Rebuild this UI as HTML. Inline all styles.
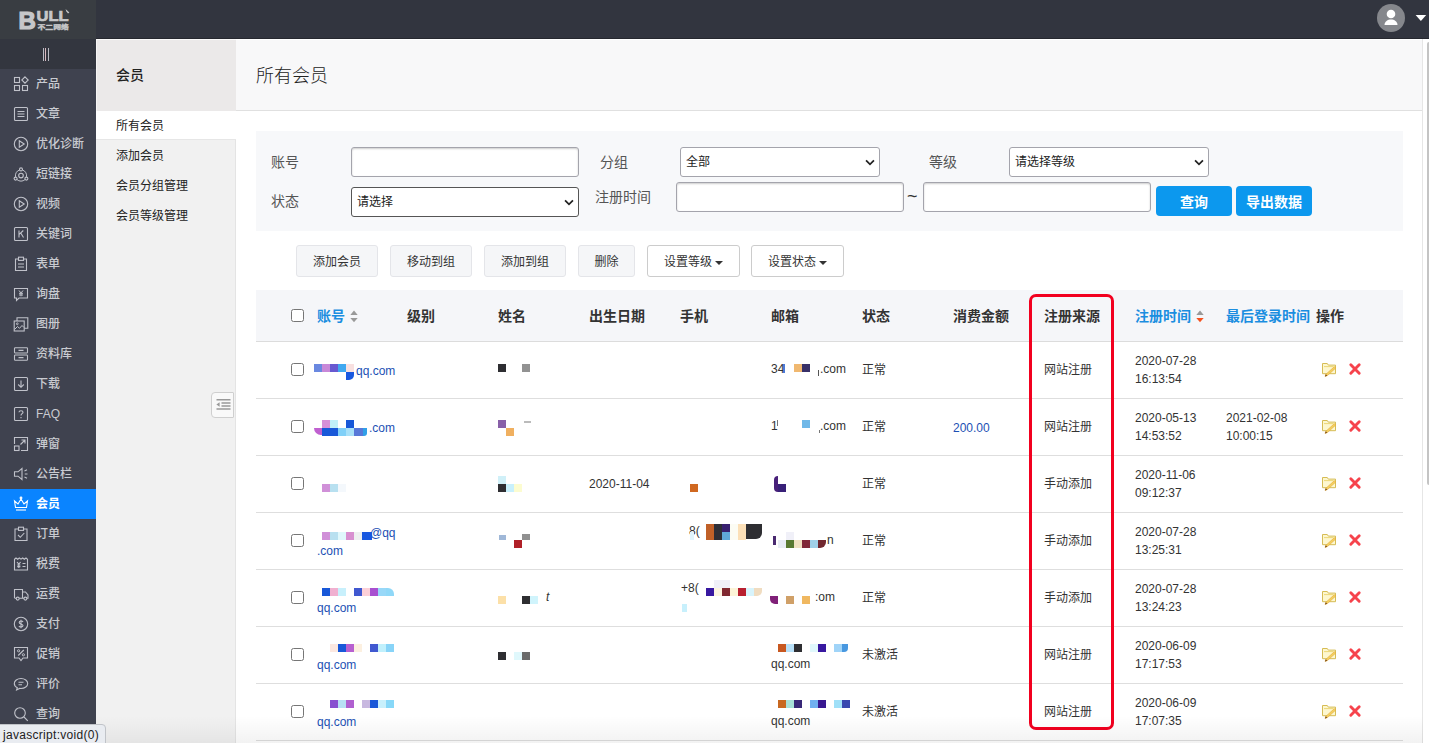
<!DOCTYPE html>
<html lang="zh-CN">
<head>
<meta charset="utf-8">
<title>所有会员</title>
<style>
*{box-sizing:border-box;margin:0;padding:0}
html,body{width:1429px;height:743px;overflow:hidden;background:#fff}
body{font-family:"Liberation Sans","Noto Sans CJK SC",sans-serif;font-size:12px;color:#333;position:relative}
a{text-decoration:none;color:inherit}
i{font-style:normal}
/* top bar */
#top{position:absolute;left:0;top:0;width:1429px;height:39px;background:#32353f;border-bottom:1px solid #26282f}
#logo{position:absolute;left:0;top:0;width:96px;height:39px;background:#393d42}
#side{position:absolute;left:0;top:39px;width:96px;height:704px;background:#3f424f}
#fold{position:absolute;left:0;top:0;width:96px;height:30px;background:#33363f}
#fold i{position:absolute;top:9px;width:1px;height:13px;background:#b9bbc4}
.mi{position:absolute;left:0;width:96px;height:30px;color:#c9cbd1;font-size:12px;font-weight:500;line-height:30px;padding-left:36px;white-space:nowrap}
.mi svg{position:absolute;left:13px;top:7px;width:16px;height:16px;fill:none;stroke:#c0c2ca;stroke-width:1.1}
.mi.on{background:#0a84ff;color:#fff;font-weight:bold}
.mi.on svg{stroke:#fff}
/* second side */
#sub{position:absolute;left:96px;top:39px;width:140px;height:704px;background:#f1f1f1;border-right:1px solid #e4e4e4}
#subh{position:absolute;left:0;top:0;width:140px;height:72px;background:#ebe9e9;border-top:1px solid #fafafa;border-left:1px solid #f6f5f5;font-size:14px;font-weight:500;color:#222;line-height:70px;padding-left:19px}
.si{position:absolute;left:0;width:139px;height:30px;line-height:30px;padding-left:20px;font-size:12px;color:#222}
.si.on{background:#fff;width:140px;height:29px;border-bottom:1px solid #e6e6e6}
#tog{position:absolute;left:115px;top:353px;width:23px;height:26px;background:#f9f9f9;border:1px solid #cfcfcf;border-radius:4px 1px 1px 4px}
/* main */
#main{position:absolute;left:236px;top:39px;width:1187px;height:704px;background:#fff;border-right:1px solid #e6e6e6}
#mh{position:absolute;left:0;top:0;width:1186px;height:72px;background:#f8f8f9;border-top:1px solid #fff;border-bottom:1px solid #e0e0e0;font-size:18px;font-weight:300;line-height:72px;padding-left:20px;color:#222}
/* filter (page coords; children of body) */
#flt{position:absolute;left:256px;top:131px;width:1147px;height:100px;background:#f7f8fa}
.lb{position:absolute;font-size:14px;color:#555;line-height:20px;white-space:nowrap}
.inp{position:absolute;height:30px;background:#fff;border:1px solid #a4a4ac;border-radius:3px;box-shadow:inset 0 1px 2px rgba(0,0,0,.2);font-size:12px;line-height:28px;padding-left:5px;color:#222}
.sel{box-shadow:none}
.sel svg{position:absolute;right:4px;top:11px;width:10px;height:7px}
.bb{position:absolute;top:186px;width:76px;height:30px;background:#0c98ee;border-radius:4px;color:#fff;font-size:14px;font-weight:bold;text-align:center;line-height:32px}
.btn{position:absolute;top:245px;height:32px;border:1px solid #e4e5e9;background:#f5f6f8;border-radius:3px;font-size:12px;color:#333;text-align:center;line-height:30px;padding-top:1px;white-space:nowrap}
.btn.w{background:#fff;border-color:#ccc}
.car{display:inline-block;width:0;height:0;border-left:4px solid transparent;border-right:4px solid transparent;border-top:4px solid #333;vertical-align:middle;margin-left:3px}
/* table */
#th{position:absolute;left:256px;top:290px;width:1147px;height:52px;background:#f5f6f9;border-bottom:1px solid #dcdcdc}
.h{position:absolute;top:306px;font-size:14px;font-weight:bold;color:#333;line-height:20px;white-space:nowrap}
.h.b{color:#1b8ee0}
.row{position:absolute;left:256px;width:1147px;height:57px;border-bottom:1px solid #dedede}
.cb{position:absolute;width:13px;height:13px;border:1px solid #767676;border-radius:2.5px;background:#fff}
.t{position:absolute;font-size:12px;line-height:18px;color:#333;white-space:nowrap}
.t.lk{color:#1c50b4}
.ic{position:absolute;width:17px;height:16px}
.m{position:absolute;display:block}
#red{position:absolute;left:1029px;top:294px;width:85px;height:436px;border:3px solid #f2001f;border-radius:7px}
#tip{position:absolute;left:-1px;top:724px;width:107px;height:20px;background:#e9ecf1;border:1px solid #c0c3c8;border-radius:0 4px 0 0;font-size:12px;letter-spacing:.3px;line-height:20px;padding-left:3px;color:#222}
#sb{position:absolute;left:1427px;top:42px;width:4px;height:443px;background:#c4c4c4;border-radius:4px}
#shade{position:absolute;left:0;top:716px;width:1423px;height:27px;background:linear-gradient(rgba(0,0,0,0),rgba(0,0,0,.05))}
</style>
</head>
<body>
<div id="top"><div id="logo">
<svg width="96" height="39" viewBox="0 0 96 39" style="position:absolute;left:0;top:0">
<text x="18.5" y="28.6" font-family="Liberation Sans,sans-serif" font-weight="bold" font-size="24" fill="#c6c7c9" stroke="#c6c7c9" stroke-width="1.2">B</text>
<text x="36.5" y="21" font-family="Liberation Sans,sans-serif" font-weight="bold" font-size="14.5" fill="#c6c7c9" stroke="#c6c7c9" stroke-width=".7" textLength="32" lengthAdjust="spacingAndGlyphs">ULL</text>
<path d="M65.5 9L69.4 12.4L68 13.6L66.3 11.2Z" fill="#c6c7c9"/>
<g transform="translate(37.5,29.3) scale(1,0.7)"><text x="0" y="0" font-family="Noto Sans CJK SC,sans-serif" font-weight="900" font-size="8.4" fill="#c6c7c9" stroke="#c6c7c9" stroke-width=".4" textLength="31.5" lengthAdjust="spacingAndGlyphs">不二网络</text></g>
</svg>
</div>
<svg width="60" height="39" viewBox="0 0 60 39" style="position:absolute;left:1369px;top:0">
<circle cx="22" cy="18" r="14" fill="#85878c"/>
<circle cx="22" cy="14" r="4.3" fill="#fff"/>
<path d="M15.5 25C15.5 17.5 28.5 17.5 28.5 25Z" fill="#fff"/>
<path d="M46.6 15h10.6l-5.3 6z" fill="#fff"/>
</svg>
</div>
<div id="side"><div id="fold"><i style="left:43px"></i><i style="left:45px;background:#d8b8c0"></i><i style="left:48px"></i></div>
<a class="mi" style="top:30px"><svg viewBox="0 0 16 16"><rect x="1.5" y="1.5" width="5" height="5"/><rect x="1.5" y="9.5" width="5" height="5"/><rect x="9.5" y="9.5" width="5" height="5"/><path d="M12 0.8 L15.2 4 L12 7.2 L8.8 4 Z"/></svg>产品</a>
<a class="mi" style="top:60px"><svg viewBox="0 0 16 16"><rect x="1.5" y="1.5" width="13" height="13" rx="1"/><path d="M4.5 5.5h7M4.5 8h7M4.5 10.5h7"/></svg>文章</a>
<a class="mi" style="top:90px"><svg viewBox="0 0 16 16"><circle cx="8" cy="8" r="6.7"/><path d="M6.3 4.8 L11.2 8 L6.3 11.2 Z"/></svg>优化诊断</a>
<a class="mi" style="top:120px"><svg viewBox="0 0 16 16"><circle cx="8" cy="9.6" r="2.3"/><circle cx="8" cy="3.4" r="1.5"/><circle cx="2.6" cy="12.6" r="1.5"/><circle cx="13.4" cy="12.6" r="1.5"/><path d="M2.6 11 A5.8 5.8 0 0 1 6.5 4 M9.5 4 A5.8 5.8 0 0 1 13.4 11 M4 13.6 A6 6 0 0 0 12 13.6" stroke-width="1"/></svg>短链接</a>
<a class="mi" style="top:150px"><svg viewBox="0 0 16 16"><circle cx="8" cy="8" r="6.7"/><path d="M6.3 4.8 L11.2 8 L6.3 11.2 Z"/></svg>视频</a>
<a class="mi" style="top:180px"><svg viewBox="0 0 16 16"><rect x="1.5" y="1.5" width="13" height="13" rx="1"/><path d="M6 4.5v7M10.3 4.5L6.2 8.3M7.8 7L10.5 11.5"/></svg>关键词</a>
<a class="mi" style="top:210px"><svg viewBox="0 0 16 16"><path d="M5.5 3H2.5v11.5h11V3h-3"/><rect x="5.5" y="1.2" width="5" height="3.2"/><path d="M5 8h6M5 11h6"/></svg>表单</a>
<a class="mi" style="top:240px"><svg viewBox="0 0 16 16"><path d="M1.5 2.5h13v9.5H6L3.5 14.5V12H1.5Z"/><path d="M6 4.5L8 7L10 4.5M8 7V10.3M6 7.3h4M6 9h4" stroke-width="1"/></svg>询盘</a>
<a class="mi" style="top:270px"><svg viewBox="0 0 16 16"><rect x="1.2" y="5" width="10" height="10"/><path d="M4 5V1.8h10.8v10.5H11.2"/><path d="M1.5 13.5L4.5 10.5L6.5 12.3L9 9.5L11 11.5" stroke-width="1"/><circle cx="4.3" cy="7.8" r="0.9" stroke-width="0.9"/></svg>图册</a>
<a class="mi" style="top:300px"><svg viewBox="0 0 16 16"><rect x="1.5" y="1.8" width="13" height="5.2" rx="0.8"/><rect x="1.5" y="9" width="13" height="5.2" rx="0.8"/><path d="M5.5 4.4h5M5.5 11.6h5"/></svg>资料库</a>
<a class="mi" style="top:330px"><svg viewBox="0 0 16 16"><rect x="1.5" y="1.5" width="13" height="13" rx="1"/><path d="M8 4.5v6.5M5.2 8.5L8 11.3L10.8 8.5"/></svg>下载</a>
<a class="mi" style="top:360px"><svg viewBox="0 0 16 16"><rect x="1.5" y="1.5" width="13" height="13" rx="1"/><path d="M6 6.2C6 4.2 10 4.2 10 6.2C10 7.8 8 7.6 8 9.5M8 11v1.2" stroke-width="1.1"/></svg>FAQ</a>
<a class="mi" style="top:390px"><svg viewBox="0 0 16 16"><path d="M8 14.5h6.5v-13h-13V8"/><rect x="1.5" y="10" width="4.5" height="4.5"/><path d="M7.5 8.5L12 4M8.5 4H12V7.5"/></svg>弹窗</a>
<a class="mi" style="top:420px"><svg viewBox="0 0 16 16"><path d="M1.5 5.8H5L9 2.5V13.5L5 10.2H1.5Z"/><path d="M11.5 5L14 3.8M11.8 8H14.5M11.5 11L14 12.2"/></svg>公告栏</a>
<a class="mi on" style="top:450px"><svg viewBox="0 0 16 16"><path d="M2.5 11.5L1.5 5L5 8L8 3L11 8L14.5 5L13.5 11.5Z"/><path d="M3 14h10"/><circle cx="8" cy="2" r="0.9"/></svg>会员</a>
<a class="mi" style="top:480px"><svg viewBox="0 0 16 16"><path d="M5.5 3H2v11.5h12V3h-3.5"/><rect x="5.5" y="1.2" width="5" height="3.2"/><path d="M5 9L7.3 11.3L11.3 7"/></svg>订单</a>
<a class="mi" style="top:510px"><svg viewBox="0 0 16 16"><path d="M1.5 3.2 L3 2 L4.7 3.2 L6.3 2 L8 3.2 L9.7 2 L11.3 3.2 L13 2 L14.5 3.2 V14 H1.5Z"/><path d="M4 6L5.8 8.2L7.6 6M5.8 8.2V12M4.2 9h3.2M4.2 10.6h3.2M9.5 7.5h3M9.5 10.5h3" stroke-width="1.1"/></svg>税费</a>
<a class="mi" style="top:540px"><svg viewBox="0 0 16 16"><path d="M1.5 12V3.5H9.5V12M9.5 6H12.5L15 9V12.2H13.8M11 12.2H6.2M3.2 12.2H1.5"/><circle cx="4.7" cy="12.6" r="1.5"/><circle cx="12.4" cy="12.6" r="1.5"/></svg>运费</a>
<a class="mi" style="top:570px"><svg viewBox="0 0 16 16"><circle cx="8" cy="8" r="6.7"/><path d="M10 6C9.6 4.6 6.2 4.6 6.2 6.4C6.2 8.2 10 7.6 10 9.6C10 11.4 6.4 11.4 6 10M8 3.8V12.2" stroke-width="1.1"/></svg>支付</a>
<a class="mi" style="top:600px"><svg viewBox="0 0 16 16"><path d="M1.5 1.5h13v10.5H10L8 14.5L6 12H1.5Z"/><path d="M5.2 9.5L10.8 4" stroke-width="1.1"/><circle cx="5.6" cy="4.8" r="1.1" stroke-width="1"/><circle cx="10.4" cy="8.8" r="1.1" stroke-width="1"/></svg>促销</a>
<a class="mi" style="top:630px"><svg viewBox="0 0 16 16"><path d="M8 2.5C4.2 2.5 1.3 4.8 1.3 7.5C1.3 9.3 2.5 10.8 4.3 11.7L3.6 14L6.6 12.4C7 12.5 7.5 12.5 8 12.5C11.8 12.5 14.7 10.2 14.7 7.5C14.7 4.8 11.8 2.5 8 2.5Z"/><path d="M5.5 6.3h5M5.5 8.7h3.5"/></svg>评价</a>
<a class="mi" style="top:660px"><svg viewBox="0 0 16 16"><circle cx="7" cy="7" r="5.3"/><path d="M11 11L14.8 14.8"/></svg>查询</a>
</div>
<div id="sub"><div id="subh">会员</div>
<div class="si on" style="top:72px">所有会员</div>
<div class="si" style="top:102px">添加会员</div>
<div class="si" style="top:132px">会员分组管理</div>
<div class="si" style="top:162px">会员等级管理</div>
<div id="tog"><svg width="15" height="11" viewBox="0 0 15 11" style="position:absolute;left:3.5px;top:6px"><path d="M0.5 0.8h14M5.5 3.9h9M5.5 7h9M0.5 10.1h14" stroke="#999" stroke-width="1.5" fill="none"/><path d="M3.6 3.2v4.6L0.4 5.5z" fill="#999"/></svg></div>
</div>
<div id="main"><div id="mh">所有会员</div></div>

<div id="flt"></div>
<span class="lb" style="left:271px;top:152px">账号</span>
<span class="lb" style="left:271px;top:191px">状态</span>
<span class="lb" style="left:600px;top:152px">分组</span>
<span class="lb" style="left:595px;top:187px">注册时间</span>
<span class="lb" style="left:929px;top:152px">等级</span>
<span class="lb" style="left:907px;top:186px;color:#333;font-size:18px">~</span>
<div class="inp" style="left:351px;top:147px;width:228px"></div>
<div class="inp sel" style="left:351px;top:187px;width:228px;border-color:#555">请选择<svg viewBox="0 0 11 8"><path d="M1 1.5L5.5 6L10 1.5" stroke="#222" stroke-width="2" fill="none"/></svg></div>
<div class="inp sel" style="left:680px;top:147px;width:200px">全部<svg viewBox="0 0 11 8"><path d="M1 1.5L5.5 6L10 1.5" stroke="#222" stroke-width="2" fill="none"/></svg></div>
<div class="inp sel" style="left:1009px;top:147px;width:200px">请选择等级<svg viewBox="0 0 11 8"><path d="M1 1.5L5.5 6L10 1.5" stroke="#222" stroke-width="2" fill="none"/></svg></div>
<div class="inp" style="left:676px;top:182px;width:228px"></div>
<div class="inp" style="left:923px;top:182px;width:228px"></div>
<a class="bb" style="left:1156px">查询</a>
<a class="bb" style="left:1236px">导出数据</a>

<a class="btn" style="left:296px;width:82px">添加会员</a>
<a class="btn" style="left:390px;width:82px">移动到组</a>
<a class="btn" style="left:484px;width:82px">添加到组</a>
<a class="btn" style="left:578px;width:57px">删除</a>
<a class="btn w" style="left:647px;width:93px">设置等级<i class="car"></i></a>
<a class="btn w" style="left:751px;width:93px">设置状态<i class="car"></i></a>

<div id="th"></div>
<span class="cb" style="left:291px;top:309px"></span>
<span class="h b" style="left:317px">账号</span>
<svg style="position:absolute;left:349.5px;top:309.5px" width="8" height="13" viewBox="0 0 8 13"><path d="M4 0.6L7.7 4.9H0.3Z" fill="#999"/><path d="M4 12.2L7.7 7.9H0.3Z" fill="#999"/></svg>
<span class="h" style="left:407px">级别</span>
<span class="h" style="left:498px">姓名</span>
<span class="h" style="left:589px">出生日期</span>
<span class="h" style="left:680px">手机</span>
<span class="h" style="left:771px">邮箱</span>
<span class="h" style="left:862px">状态</span>
<span class="h" style="left:953px">消费金额</span>
<span class="h" style="left:1044px">注册来源</span>
<span class="h b" style="left:1135px">注册时间</span>
<svg style="position:absolute;left:1195.5px;top:309.5px" width="8" height="13" viewBox="0 0 8 13"><path d="M4 0.6L7.7 4.9H0.3Z" fill="#999"/><path d="M4 12.2L7.7 7.9H0.3Z" fill="#f4511e"/></svg>
<span class="h b" style="left:1226px">最后登录时间</span>
<span class="h" style="left:1316px">操作</span>
<div class="row" style="top:342px"></div><span class="cb" style="left:291px;top:363px"></span><span class="t" style="left:862px;top:361px">正常</span><span class="t" style="left:1044px;top:361px">网站注册</span><span class="t d" style="left:1135px;top:352px">2020-07-28<br>16:13:54</span><svg class="ic" style="left:1322px;top:363px;width:16px;height:14px" viewBox="0 0 16 14"><path d="M0.5 0.5h4.8l1 1.6h7.2v8.6h-13z" fill="#fdf7cf" stroke="#d6bc55"/><path d="M2 3.6h9.5" stroke="#ecd777"/><path d="M4 11.2L12.4 3.6L13.8 5L5.4 12.6L3 13.4Z" fill="#f5d060" stroke="#dfa838" stroke-width=".6"/><path d="M3 13.4L3.7 11.3L5.3 12.8Z" fill="#7a4a18"/></svg><svg class="ic" style="left:1348px;top:362px;width:14px;height:14px" viewBox="0 0 14 14"><path d="M2.8 2.8L11.2 11.2M11.2 2.8L2.8 11.2" stroke="#f6434c" stroke-width="2.9" stroke-linecap="round" fill="none"/></svg>
<div class="row" style="top:399px"></div><span class="cb" style="left:291px;top:420px"></span><span class="t" style="left:862px;top:418px">正常</span><span class="t" style="left:1044px;top:418px">网站注册</span><span class="t d" style="left:1135px;top:409px">2020-05-13<br>14:53:52</span><svg class="ic" style="left:1322px;top:420px;width:16px;height:14px" viewBox="0 0 16 14"><path d="M0.5 0.5h4.8l1 1.6h7.2v8.6h-13z" fill="#fdf7cf" stroke="#d6bc55"/><path d="M2 3.6h9.5" stroke="#ecd777"/><path d="M4 11.2L12.4 3.6L13.8 5L5.4 12.6L3 13.4Z" fill="#f5d060" stroke="#dfa838" stroke-width=".6"/><path d="M3 13.4L3.7 11.3L5.3 12.8Z" fill="#7a4a18"/></svg><svg class="ic" style="left:1348px;top:419px;width:14px;height:14px" viewBox="0 0 14 14"><path d="M2.8 2.8L11.2 11.2M11.2 2.8L2.8 11.2" stroke="#f6434c" stroke-width="2.9" stroke-linecap="round" fill="none"/></svg>
<div class="row" style="top:456px"></div><span class="cb" style="left:291px;top:477px"></span><span class="t" style="left:862px;top:475px">正常</span><span class="t" style="left:1044px;top:475px">手动添加</span><span class="t d" style="left:1135px;top:466px">2020-11-06<br>09:12:37</span><svg class="ic" style="left:1322px;top:477px;width:16px;height:14px" viewBox="0 0 16 14"><path d="M0.5 0.5h4.8l1 1.6h7.2v8.6h-13z" fill="#fdf7cf" stroke="#d6bc55"/><path d="M2 3.6h9.5" stroke="#ecd777"/><path d="M4 11.2L12.4 3.6L13.8 5L5.4 12.6L3 13.4Z" fill="#f5d060" stroke="#dfa838" stroke-width=".6"/><path d="M3 13.4L3.7 11.3L5.3 12.8Z" fill="#7a4a18"/></svg><svg class="ic" style="left:1348px;top:476px;width:14px;height:14px" viewBox="0 0 14 14"><path d="M2.8 2.8L11.2 11.2M11.2 2.8L2.8 11.2" stroke="#f6434c" stroke-width="2.9" stroke-linecap="round" fill="none"/></svg>
<div class="row" style="top:513px"></div><span class="cb" style="left:291px;top:534px"></span><span class="t" style="left:862px;top:532px">正常</span><span class="t" style="left:1044px;top:532px">手动添加</span><span class="t d" style="left:1135px;top:523px">2020-07-28<br>13:25:31</span><svg class="ic" style="left:1322px;top:534px;width:16px;height:14px" viewBox="0 0 16 14"><path d="M0.5 0.5h4.8l1 1.6h7.2v8.6h-13z" fill="#fdf7cf" stroke="#d6bc55"/><path d="M2 3.6h9.5" stroke="#ecd777"/><path d="M4 11.2L12.4 3.6L13.8 5L5.4 12.6L3 13.4Z" fill="#f5d060" stroke="#dfa838" stroke-width=".6"/><path d="M3 13.4L3.7 11.3L5.3 12.8Z" fill="#7a4a18"/></svg><svg class="ic" style="left:1348px;top:533px;width:14px;height:14px" viewBox="0 0 14 14"><path d="M2.8 2.8L11.2 11.2M11.2 2.8L2.8 11.2" stroke="#f6434c" stroke-width="2.9" stroke-linecap="round" fill="none"/></svg>
<div class="row" style="top:570px"></div><span class="cb" style="left:291px;top:591px"></span><span class="t" style="left:862px;top:589px">正常</span><span class="t" style="left:1044px;top:589px">手动添加</span><span class="t d" style="left:1135px;top:580px">2020-07-28<br>13:24:23</span><svg class="ic" style="left:1322px;top:591px;width:16px;height:14px" viewBox="0 0 16 14"><path d="M0.5 0.5h4.8l1 1.6h7.2v8.6h-13z" fill="#fdf7cf" stroke="#d6bc55"/><path d="M2 3.6h9.5" stroke="#ecd777"/><path d="M4 11.2L12.4 3.6L13.8 5L5.4 12.6L3 13.4Z" fill="#f5d060" stroke="#dfa838" stroke-width=".6"/><path d="M3 13.4L3.7 11.3L5.3 12.8Z" fill="#7a4a18"/></svg><svg class="ic" style="left:1348px;top:590px;width:14px;height:14px" viewBox="0 0 14 14"><path d="M2.8 2.8L11.2 11.2M11.2 2.8L2.8 11.2" stroke="#f6434c" stroke-width="2.9" stroke-linecap="round" fill="none"/></svg>
<div class="row" style="top:627px"></div><span class="cb" style="left:291px;top:648px"></span><span class="t" style="left:862px;top:646px">未激活</span><span class="t" style="left:1044px;top:646px">网站注册</span><span class="t d" style="left:1135px;top:637px">2020-06-09<br>17:17:53</span><svg class="ic" style="left:1322px;top:648px;width:16px;height:14px" viewBox="0 0 16 14"><path d="M0.5 0.5h4.8l1 1.6h7.2v8.6h-13z" fill="#fdf7cf" stroke="#d6bc55"/><path d="M2 3.6h9.5" stroke="#ecd777"/><path d="M4 11.2L12.4 3.6L13.8 5L5.4 12.6L3 13.4Z" fill="#f5d060" stroke="#dfa838" stroke-width=".6"/><path d="M3 13.4L3.7 11.3L5.3 12.8Z" fill="#7a4a18"/></svg><svg class="ic" style="left:1348px;top:647px;width:14px;height:14px" viewBox="0 0 14 14"><path d="M2.8 2.8L11.2 11.2M11.2 2.8L2.8 11.2" stroke="#f6434c" stroke-width="2.9" stroke-linecap="round" fill="none"/></svg>
<div class="row" style="top:684px"></div><span class="cb" style="left:291px;top:705px"></span><span class="t" style="left:862px;top:703px">未激活</span><span class="t" style="left:1044px;top:703px">网站注册</span><span class="t d" style="left:1135px;top:694px">2020-06-09<br>17:07:35</span><svg class="ic" style="left:1322px;top:705px;width:16px;height:14px" viewBox="0 0 16 14"><path d="M0.5 0.5h4.8l1 1.6h7.2v8.6h-13z" fill="#fdf7cf" stroke="#d6bc55"/><path d="M2 3.6h9.5" stroke="#ecd777"/><path d="M4 11.2L12.4 3.6L13.8 5L5.4 12.6L3 13.4Z" fill="#f5d060" stroke="#dfa838" stroke-width=".6"/><path d="M3 13.4L3.7 11.3L5.3 12.8Z" fill="#7a4a18"/></svg><svg class="ic" style="left:1348px;top:704px;width:14px;height:14px" viewBox="0 0 14 14"><path d="M2.8 2.8L11.2 11.2M11.2 2.8L2.8 11.2" stroke="#f6434c" stroke-width="2.9" stroke-linecap="round" fill="none"/></svg>
<a class="t lk" style="left:356px;top:362px">qq.com</a>
<span class="t" style="left:771px;top:360px">34</span><span class="t" style="left:820px;top:360px">.com</span>
<a class="t lk" style="left:369px;top:419px">.com</a>
<span class="t" style="left:771px;top:417px">1</span><span class="t" style="left:820px;top:417px">.com</span>
<a class="t lk" style="left:953px;top:419px">200.00</a>
<span class="t d" style="left:1226px;top:409px">2021-02-08<br>10:00:15</span>
<span class="t" style="left:589px;top:475px">2020-11-04</span>
<a class="t lk d" style="left:317px;top:524px"><span style="margin-left:53px">@qq</span><br>.com</a>
<span class="t" style="left:689px;top:522px">8(</span>
<span class="t" style="left:827px;top:531px">n</span>
<a class="t lk d" style="left:317px;top:581px">&nbsp;<br>qq.com</a>
<span class="t" style="left:681px;top:579px">+8(</span>
<span class="t" style="left:815px;top:588px">:om</span>
<span class="t" style="left:546px;top:588px;font-style:italic">t</span>
<a class="t lk d" style="left:317px;top:638px">&nbsp;<br>qq.com</a>
<span class="t d" style="left:771px;top:637px">&nbsp;<br>qq.com</span>
<a class="t lk d" style="left:317px;top:695px">&nbsp;<br>qq.com</a>
<span class="t d" style="left:771px;top:694px">&nbsp;<br>qq.com</span>
<i class="m" style="left:314px;top:364px;width:8px;height:8px;background:#6a88e0"></i><i class="m" style="left:322px;top:364px;width:8px;height:8px;background:#c888d8"></i><i class="m" style="left:330px;top:364px;width:8px;height:8px;background:#6858d0"></i><i class="m" style="left:338px;top:364px;width:8px;height:8px;background:#40a8f0"></i><i class="m" style="left:346px;top:364px;width:8px;height:8px;background:#f8e0e0"></i><i class="m" style="left:346px;top:372px;width:8px;height:8px;background:#1858e0;border-radius:0 0 5px 0"></i><i class="m" style="left:498px;top:364px;width:8px;height:8px;background:#2e2e32"></i><i class="m" style="left:522px;top:364px;width:8px;height:8px;background:#929292"></i><i class="m" style="left:794px;top:364px;width:8px;height:8px;background:#f0b870"></i><i class="m" style="left:802px;top:364px;width:8px;height:8px;background:#383068"></i><i class="m" style="left:783px;top:364px;width:2px;height:9px;background:#4a7ad8"></i><i class="m" style="left:818px;top:370px;width:1px;height:6px;background:#555"></i><i class="m" style="left:322px;top:420px;width:8px;height:8px;background:#d890d8"></i><i class="m" style="left:330px;top:420px;width:8px;height:8px;background:#c0f0f8"></i><i class="m" style="left:346px;top:420px;width:8px;height:8px;background:#1858d8"></i><i class="m" style="left:314px;top:428px;width:8px;height:7px;background:#c060d0;border-radius:0 0 0 8px"></i><i class="m" style="left:322px;top:428px;width:16px;height:8px;background:#1858d8"></i><i class="m" style="left:338px;top:428px;width:8px;height:8px;background:#80d0f8"></i><i class="m" style="left:346px;top:428px;width:8px;height:8px;background:#a8e0f8"></i><i class="m" style="left:354px;top:428px;width:9px;height:8px;background:#5878d8"></i><i class="m" style="left:363px;top:428px;width:4px;height:8px;background:#30a0e8;border-radius:0 0 3px 0"></i><i class="m" style="left:498px;top:420px;width:8px;height:8px;background:#8860a8"></i><i class="m" style="left:506px;top:428px;width:8px;height:8px;background:#f0b060"></i><i class="m" style="left:524px;top:421px;width:7px;height:2px;background:#bbb"></i><i class="m" style="left:802px;top:420px;width:8px;height:8px;background:#70b8e8"></i><i class="m" style="left:777px;top:420px;width:1px;height:6px;background:#777"></i><i class="m" style="left:819px;top:430px;width:1px;height:3px;background:#777"></i><i class="m" style="left:322px;top:484px;width:8px;height:8px;background:#d090d8"></i><i class="m" style="left:330px;top:484px;width:8px;height:8px;background:#b8e0f0"></i><i class="m" style="left:338px;top:484px;width:8px;height:8px;background:#f4f8fc"></i><i class="m" style="left:498px;top:476px;width:8px;height:8px;background:#d0f0f8"></i><i class="m" style="left:498px;top:484px;width:8px;height:8px;background:#2e2e32"></i><i class="m" style="left:506px;top:484px;width:8px;height:8px;background:#c8f0fc"></i><i class="m" style="left:514px;top:484px;width:8px;height:8px;background:#fcfcd0"></i><i class="m" style="left:690px;top:484px;width:8px;height:8px;background:#d06820"></i><i class="m" style="left:774px;top:476px;width:4px;height:16px;background:#48207a;border-radius:4px 0 0 4px"></i><i class="m" style="left:778px;top:484px;width:8px;height:8px;background:#382078"></i><i class="m" style="left:322px;top:532px;width:8px;height:8px;background:#d090d8"></i><i class="m" style="left:330px;top:532px;width:8px;height:8px;background:#b8e0f0"></i><i class="m" style="left:338px;top:532px;width:8px;height:8px;background:#e0f8fc"></i><i class="m" style="left:346px;top:532px;width:8px;height:8px;background:#d890d0"></i><i class="m" style="left:354px;top:532px;width:8px;height:8px;background:#eef0f0"></i><i class="m" style="left:362px;top:532px;width:10px;height:8px;background:#1858e0"></i><i class="m" style="left:499px;top:535px;width:7px;height:5px;background:#a0b8d8"></i><i class="m" style="left:522px;top:534px;width:8px;height:6px;background:#909090"></i><i class="m" style="left:514px;top:540px;width:8px;height:8px;background:#b02028"></i><i class="m" style="left:706px;top:524px;width:8px;height:16px;background:#c06028"></i><i class="m" style="left:714px;top:524px;width:8px;height:16px;background:#2e2e36"></i><i class="m" style="left:722px;top:524px;width:8px;height:8px;background:#382070"></i><i class="m" style="left:722px;top:532px;width:8px;height:8px;background:#60a8d8"></i><i class="m" style="left:730px;top:524px;width:8px;height:16px;background:#fcfcf4"></i><i class="m" style="left:738px;top:524px;width:8px;height:16px;background:#fce0b8"></i><i class="m" style="left:746px;top:524px;width:16px;height:15px;background:#2e2e32;border-radius:0 0 6px 0"></i><i class="m" style="left:690px;top:532px;width:4px;height:8px;background:#e0f4fc"></i><i class="m" style="left:786px;top:532px;width:8px;height:8px;background:#f0f0f8"></i><i class="m" style="left:778px;top:540px;width:8px;height:8px;background:#e8ecf4"></i><i class="m" style="left:786px;top:540px;width:8px;height:8px;background:#587830"></i><i class="m" style="left:794px;top:540px;width:8px;height:8px;background:#f0e0c0"></i><i class="m" style="left:802px;top:540px;width:8px;height:8px;background:#802838"></i><i class="m" style="left:810px;top:540px;width:8px;height:8px;background:#a0d0e8"></i><i class="m" style="left:818px;top:540px;width:8px;height:8px;background:#702830;border-radius:0 0 6px 0"></i><i class="m" style="left:773px;top:536px;width:3px;height:9px;background:#4a2a70"></i><i class="m" style="left:322px;top:588px;width:8px;height:8px;background:#1858d8"></i><i class="m" style="left:330px;top:588px;width:8px;height:8px;background:#f0b0d0"></i><i class="m" style="left:338px;top:588px;width:8px;height:8px;background:#c8f0fc"></i><i class="m" style="left:354px;top:588px;width:8px;height:8px;background:#4058d0"></i><i class="m" style="left:362px;top:588px;width:8px;height:8px;background:#fcd0d8"></i><i class="m" style="left:370px;top:588px;width:8px;height:8px;background:#a850d0"></i><i class="m" style="left:378px;top:588px;width:8px;height:8px;background:#98d8f8"></i><i class="m" style="left:386px;top:588px;width:8px;height:8px;background:#90d8f8;border-radius:0 6px 0 0"></i><i class="m" style="left:498px;top:596px;width:8px;height:8px;background:#fce0a8"></i><i class="m" style="left:522px;top:596px;width:8px;height:8px;background:#2e2e32"></i><i class="m" style="left:530px;top:596px;width:8px;height:8px;background:#d0f4fc"></i><i class="m" style="left:714px;top:580px;width:16px;height:8px;background:#f0f0f8"></i><i class="m" style="left:706px;top:588px;width:8px;height:8px;background:#3818a0"></i><i class="m" style="left:714px;top:588px;width:8px;height:8px;background:#fcf4e0"></i><i class="m" style="left:722px;top:588px;width:8px;height:8px;background:#802830"></i><i class="m" style="left:730px;top:588px;width:8px;height:8px;background:#fcf4d8"></i><i class="m" style="left:738px;top:588px;width:8px;height:8px;background:#b82030"></i><i class="m" style="left:746px;top:588px;width:8px;height:8px;background:#d8f4fc"></i><i class="m" style="left:754px;top:588px;width:8px;height:8px;background:#f0dcc0;border-radius:0 0 5px 0"></i><i class="m" style="left:682px;top:604px;width:5px;height:8px;background:#c8f0fc"></i><i class="m" style="left:770px;top:596px;width:8px;height:8px;background:#802078;border-radius:0 0 0 5px"></i><i class="m" style="left:786px;top:596px;width:8px;height:8px;background:#d0a068"></i><i class="m" style="left:802px;top:596px;width:8px;height:8px;background:#f0b860"></i><i class="m" style="left:330px;top:644px;width:8px;height:8px;background:#fce8e0"></i><i class="m" style="left:338px;top:644px;width:8px;height:8px;background:#1858d8"></i><i class="m" style="left:346px;top:644px;width:8px;height:8px;background:#b860d0"></i><i class="m" style="left:354px;top:644px;width:8px;height:8px;background:#fcf0e0"></i><i class="m" style="left:370px;top:644px;width:8px;height:8px;background:#4058d0"></i><i class="m" style="left:378px;top:644px;width:8px;height:8px;background:#c0f0fc"></i><i class="m" style="left:386px;top:644px;width:8px;height:8px;background:#88d4f8"></i><i class="m" style="left:498px;top:652px;width:8px;height:8px;background:#2e2e32"></i><i class="m" style="left:514px;top:652px;width:8px;height:8px;background:#e0f8fc"></i><i class="m" style="left:522px;top:652px;width:8px;height:8px;background:#6a6a6a"></i><i class="m" style="left:778px;top:644px;width:8px;height:8px;background:#c85820"></i><i class="m" style="left:786px;top:644px;width:8px;height:8px;background:#b8e0f8"></i><i class="m" style="left:794px;top:644px;width:8px;height:8px;background:#2e2e32"></i><i class="m" style="left:810px;top:644px;width:8px;height:8px;background:#e0f8fc"></i><i class="m" style="left:818px;top:644px;width:8px;height:8px;background:#3818a0"></i><i class="m" style="left:834px;top:644px;width:8px;height:8px;background:#a0d4f8"></i><i class="m" style="left:842px;top:644px;width:6px;height:8px;background:#4898e0;border-radius:0 0 4px 0"></i><i class="m" style="left:330px;top:700px;width:8px;height:8px;background:#8850d0"></i><i class="m" style="left:338px;top:700px;width:8px;height:8px;background:#b8e0f4"></i><i class="m" style="left:346px;top:700px;width:8px;height:8px;background:#b060d0"></i><i class="m" style="left:362px;top:700px;width:8px;height:8px;background:#c8b8e0"></i><i class="m" style="left:370px;top:700px;width:8px;height:8px;background:#1858d8"></i><i class="m" style="left:378px;top:700px;width:8px;height:8px;background:#c8f0fc"></i><i class="m" style="left:386px;top:700px;width:8px;height:8px;background:#88d8f8"></i><i class="m" style="left:778px;top:700px;width:8px;height:8px;background:#c86820"></i><i class="m" style="left:786px;top:700px;width:8px;height:8px;background:#a8e0d8"></i><i class="m" style="left:794px;top:700px;width:8px;height:8px;background:#382878"></i><i class="m" style="left:810px;top:700px;width:8px;height:8px;background:#70b0f0"></i><i class="m" style="left:818px;top:700px;width:8px;height:8px;background:#381890"></i><i class="m" style="left:834px;top:700px;width:8px;height:8px;background:#a0e0f8"></i><i class="m" style="left:842px;top:700px;width:8px;height:8px;background:#3848b0"></i>
<div id="red"></div>
<div id="shade"></div>
<div id="sb"></div>
<div id="tip">javascript:void(0)</div>
</body>
</html>
